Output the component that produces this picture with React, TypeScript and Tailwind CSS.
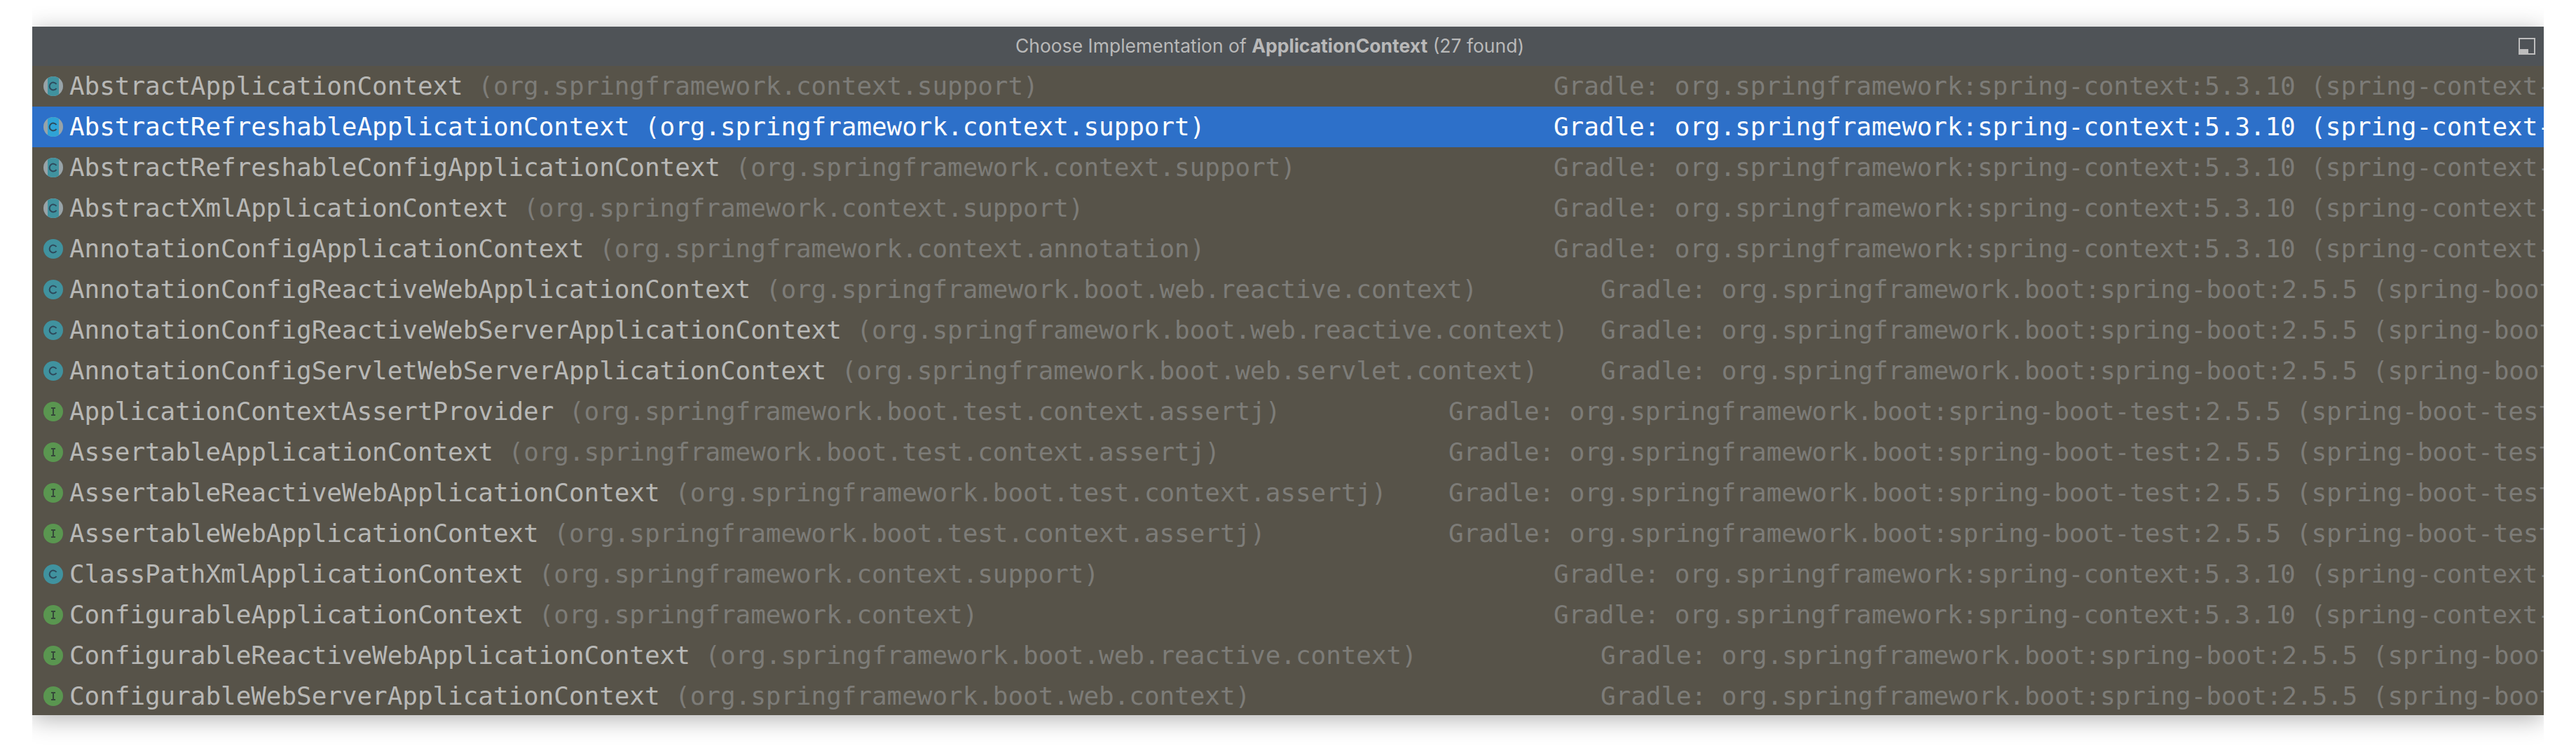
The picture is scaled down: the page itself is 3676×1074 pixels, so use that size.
type Kind = "abstract" | "class" | "interface";

interface Impl {
  name: string;
  pkg: string;
  kind: Kind;
  lib: "context" | "boot" | "test";
}

const impls: Impl[] = [
  { name: "AbstractApplicationContext", pkg: "org.springframework.context.support", kind: "abstract", lib: "context" },
  { name: "AbstractRefreshableApplicationContext", pkg: "org.springframework.context.support", kind: "abstract", lib: "context" },
  { name: "AbstractRefreshableConfigApplicationContext", pkg: "org.springframework.context.support", kind: "abstract", lib: "context" },
  { name: "AbstractXmlApplicationContext", pkg: "org.springframework.context.support", kind: "abstract", lib: "context" },
  { name: "AnnotationConfigApplicationContext", pkg: "org.springframework.context.annotation", kind: "class", lib: "context" },
  { name: "AnnotationConfigReactiveWebApplicationContext", pkg: "org.springframework.boot.web.reactive.context", kind: "class", lib: "boot" },
  { name: "AnnotationConfigReactiveWebServerApplicationContext", pkg: "org.springframework.boot.web.reactive.context", kind: "class", lib: "boot" },
  { name: "AnnotationConfigServletWebServerApplicationContext", pkg: "org.springframework.boot.web.servlet.context", kind: "class", lib: "boot" },
  { name: "ApplicationContextAssertProvider", pkg: "org.springframework.boot.test.context.assertj", kind: "interface", lib: "test" },
  { name: "AssertableApplicationContext", pkg: "org.springframework.boot.test.context.assertj", kind: "interface", lib: "test" },
  { name: "AssertableReactiveWebApplicationContext", pkg: "org.springframework.boot.test.context.assertj", kind: "interface", lib: "test" },
  { name: "AssertableWebApplicationContext", pkg: "org.springframework.boot.test.context.assertj", kind: "interface", lib: "test" },
  { name: "ClassPathXmlApplicationContext", pkg: "org.springframework.context.support", kind: "class", lib: "context" },
  { name: "ConfigurableApplicationContext", pkg: "org.springframework.context", kind: "interface", lib: "context" },
  { name: "ConfigurableReactiveWebApplicationContext", pkg: "org.springframework.boot.web.reactive.context", kind: "interface", lib: "boot" },
  { name: "ConfigurableWebServerApplicationContext", pkg: "org.springframework.boot.web.context", kind: "interface", lib: "boot" },
];

const libs = {
  context: {
    width: "w-[2118px]",
    text: "Gradle: org.springframework:spring-context:5.3.10 (spring-context-5.3.10.jar)",
  },
  boot: {
    width: "w-[2185px]",
    text: "Gradle: org.springframework.boot:spring-boot:2.5.5 (spring-boot-2.5.5.jar)",
  },
  test: {
    width: "w-[1968px]",
    text: "Gradle: org.springframework.boot:spring-boot-test:2.5.5 (spring-boot-test-2.5.5.jar)",
  },
};

function KindIcon({ kind, selected }: { kind: Kind; selected: boolean }) {
  const teal = selected ? "#2fa3d6" : "#40929f";
  return (
    <svg width="28" height="28" viewBox="0 0 28 28" className="shrink-0">
      <circle cx="14" cy="14" r="14" fill={kind === "interface" ? "#5a9650" : kind === "abstract" ? "#98a3a8" : teal} />
      {kind === "abstract" && <path d="M6 2.6A14 14 0 0 1 22 2.6V25.4A14 14 0 0 1 6 25.4Z" fill={teal} />}
      {kind === "interface" ? (
        <path d="M11 9H17M14 9V19M11 19H17" fill="none" stroke="#35483a" strokeWidth="2" />
      ) : (
        <path d="M18.5 11A5.4 5.4 0 1 0 18.5 17" fill="none" stroke="#2e4a5c" strokeWidth="2" />
      )}
    </svg>
  );
}

function ImplRow({ impl, selected }: { impl: Impl; selected: boolean }) {
  const lib = libs[impl.lib];
  return (
    <div
      className={`flex h-[58px] items-center overflow-hidden pl-4 whitespace-pre ${
        selected ? "bg-[#2d70c9] text-white" : "bg-[#575349] text-[#7d7c78]"
      }`}
    >
      <KindIcon kind={impl.kind} selected={selected} />
      <div className="ml-[9px] flex items-center">
        <span className={`${lib.width} shrink-0`}>
          <span className={selected ? "text-white" : "text-[#b8b8b6]"}>{impl.name}</span>
          {` (${impl.pkg})`}
        </span>
        <span>{lib.text}</span>
      </div>
    </div>
  );
}

export default function App() {
  return (
    <div className="min-h-[1074px] bg-white px-[46px]">
      <div className="overflow-hidden pt-[38px] pb-[54px]">
        <div className="h-[982px] overflow-hidden bg-[#575349] font-['DejaVu_Sans_Mono',monospace] text-[36px] tracking-[-0.07px] shadow-[0_6px_32px_rgba(0,0,0,0.3)]">
          <div className="flex h-[56px] items-center bg-[#4f5357] pr-3 font-['Inter',sans-serif] text-[26.5px] tracking-normal text-[#b9b9b9]">
            <div className="mr-4 flex-1 text-center">
              Choose Implementation of <span className="font-bold">ApplicationContext</span> (27 found)
            </div>
            <div className="relative size-6 border-2 border-[#bdbdbd]">
              <div className="absolute bottom-0 left-0 h-[6px] w-3 bg-[#bdbdbd]" />
            </div>
          </div>
          {impls.map((impl, i) => (
            <ImplRow key={impl.name} impl={impl} selected={i === 1} />
          ))}
        </div>
      </div>
    </div>
  );
}
